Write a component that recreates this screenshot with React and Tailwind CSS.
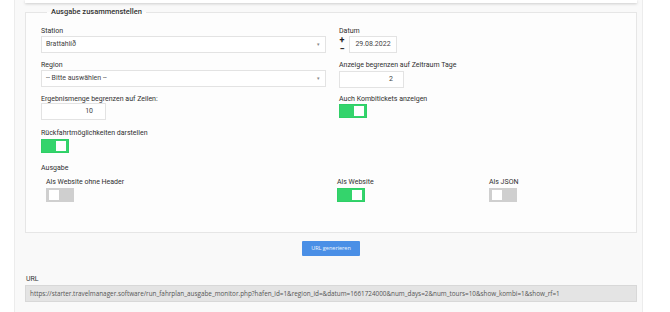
import React from "react";

function Toggle({ on }) {
  return on ? (
    <div className="w-[28px] h-[14px] bg-[#34d46c] border border-[#2fcf66] flex items-center justify-end pr-[2px]">
      <div className="w-[10px] h-[10px] bg-white" />
    </div>
  ) : (
    <div className="w-[28px] h-[14px] bg-[#cfcfcf] border border-[#cfcfcf] flex items-center justify-start pl-[2px]">
      <div className="w-[10px] h-[10px] bg-white" />
    </div>
  );
}

function Label({ children, className = "" }) {
  return <div className={"h-[9px] text-[7px] leading-[9px] text-[#2f2f2f] whitespace-nowrap " + className}>{children}</div>;
}

function Select({ value }) {
  return (
    <div className="h-[17px] w-full bg-white border border-[#e3e3e3] flex items-center justify-between pl-[4px] pr-[5px]">
      <span className="text-[7px] text-[#444]">{value}</span>
      <span className="text-[5px] text-[#888]">▾</span>
    </div>
  );
}

export default function App() {
  return (
    <div className="w-[670px] h-[312px] overflow-hidden bg-white flex" style={{ fontFamily: "Roboto, 'Open Sans', sans-serif" }}>
      <div className="ml-[14px] w-[629px] h-[312px] bg-[#f9f9f9] border-l border-r border-[#ececec] pl-[10px] pr-[5px] flex flex-col">
        <div className="h-[3px] bg-white shadow-[0_1px_3px_rgba(0,0,0,0.18)]" />
        <fieldset className="mt-[4px] border border-[#e6e6e6] bg-[#fdfdfd] pl-[15px] pr-[7px] pt-[10px] pb-[30px]">
          <legend className="ml-[6px] px-[4px] text-[7.5px] leading-[10px] font-medium text-[#333]">Ausgabe zusammenstellen</legend>
          <div className="grid grid-cols-[285px_1fr] gap-x-[13px]">
            <div className="h-[34px] flex flex-col">
              <Label>Station</Label>
              <Select value="Brattahlíð" />
            </div>
            <div className="h-[34px] flex flex-col">
              <Label>Datum</Label>
              <div className="h-[17px] flex items-center gap-[4px]">
                <div className="flex flex-col w-[6px] items-center text-[9px] font-bold text-[#222]">
                  <div className="h-[9px] leading-[9px]">+</div>
                  <div className="h-[9px] leading-[9px]">−</div>
                </div>
                <div className="h-[17px] w-[48px] bg-white border border-[#e3e3e3] flex items-center justify-center text-[7px] text-[#444]">29.08.2022</div>
              </div>
            </div>
            <div className="h-[34px] flex flex-col">
              <Label>Region</Label>
              <Select value="-- Bitte auswählen --" />
            </div>
            <div className="h-[34px] flex flex-col">
              <Label>Anzeige begrenzen auf Zeitraum Tage</Label>
              <div className="mt-[1px] h-[17px] w-[65px] bg-white border border-[#e3e3e3] flex items-center justify-end pr-[10px] text-[7px] text-[#444]">2</div>
            </div>
            <div className="h-[34px] flex flex-col">
              <Label>Ergebnismenge begrenzen auf Zeilen:</Label>
              <div className="mt-[-1px] h-[17px] w-[65px] bg-white border border-[#e3e3e3] flex items-center justify-end pr-[12px] text-[7px] text-[#444]">10</div>
            </div>
            <div className="h-[34px] flex flex-col">
              <Label>Auch Kombitickets anzeigen</Label>
              <Toggle on />
            </div>
            <div className="h-[35px] flex flex-col">
              <Label>Rückfahrtmöglichkeiten darstellen</Label>
              <div className="mt-[1px]"><Toggle on /></div>
            </div>
            <div />
          </div>
          <Label>Ausgabe</Label>
          <div className="mt-[5px] ml-[5px] flex">
            <div className="w-[291px] flex flex-col">
              <Label>Als Website ohne Header</Label>
              <div className="mt-[1px]"><Toggle /></div>
            </div>
            <div className="w-[152px] flex flex-col">
              <Label>Als Website</Label>
              <div className="mt-[1px]"><Toggle on /></div>
            </div>
            <div className="flex flex-col">
              <Label>Als JSON</Label>
              <div className="mt-[1px]"><Toggle /></div>
            </div>
          </div>
        </fieldset>
        <div className="mt-[8px] flex justify-center">
          <div className="w-[58px] h-[15px] bg-[#4a8fe6] rounded-[1px] flex items-center justify-center text-[5.5px] text-white/90" style={{ fontFamily: "'Open Sans', sans-serif" }}>URL generieren</div>
        </div>
        <div className="mt-[19px] ml-[1px] h-[9px] text-[7px] leading-[9px] text-[#333]">URL</div>
        <div className="mt-[1px] h-[17px] bg-[#e4e4e4] border border-[#d8d8d8] flex items-center pl-[4px] text-[6.35px] text-[#555] whitespace-nowrap overflow-hidden" style={{ fontFamily: "'Open Sans', sans-serif" }}>
          https://starter.travelmanager.software/run_fahrplan_ausgabe_monitor.php?hafen_id=1&amp;region_id=&amp;datum=1661724000&amp;num_days=2&amp;num_tours=10&amp;show_kombi=1&amp;show_rf=1
        </div>
      </div>
    </div>
  );
}
